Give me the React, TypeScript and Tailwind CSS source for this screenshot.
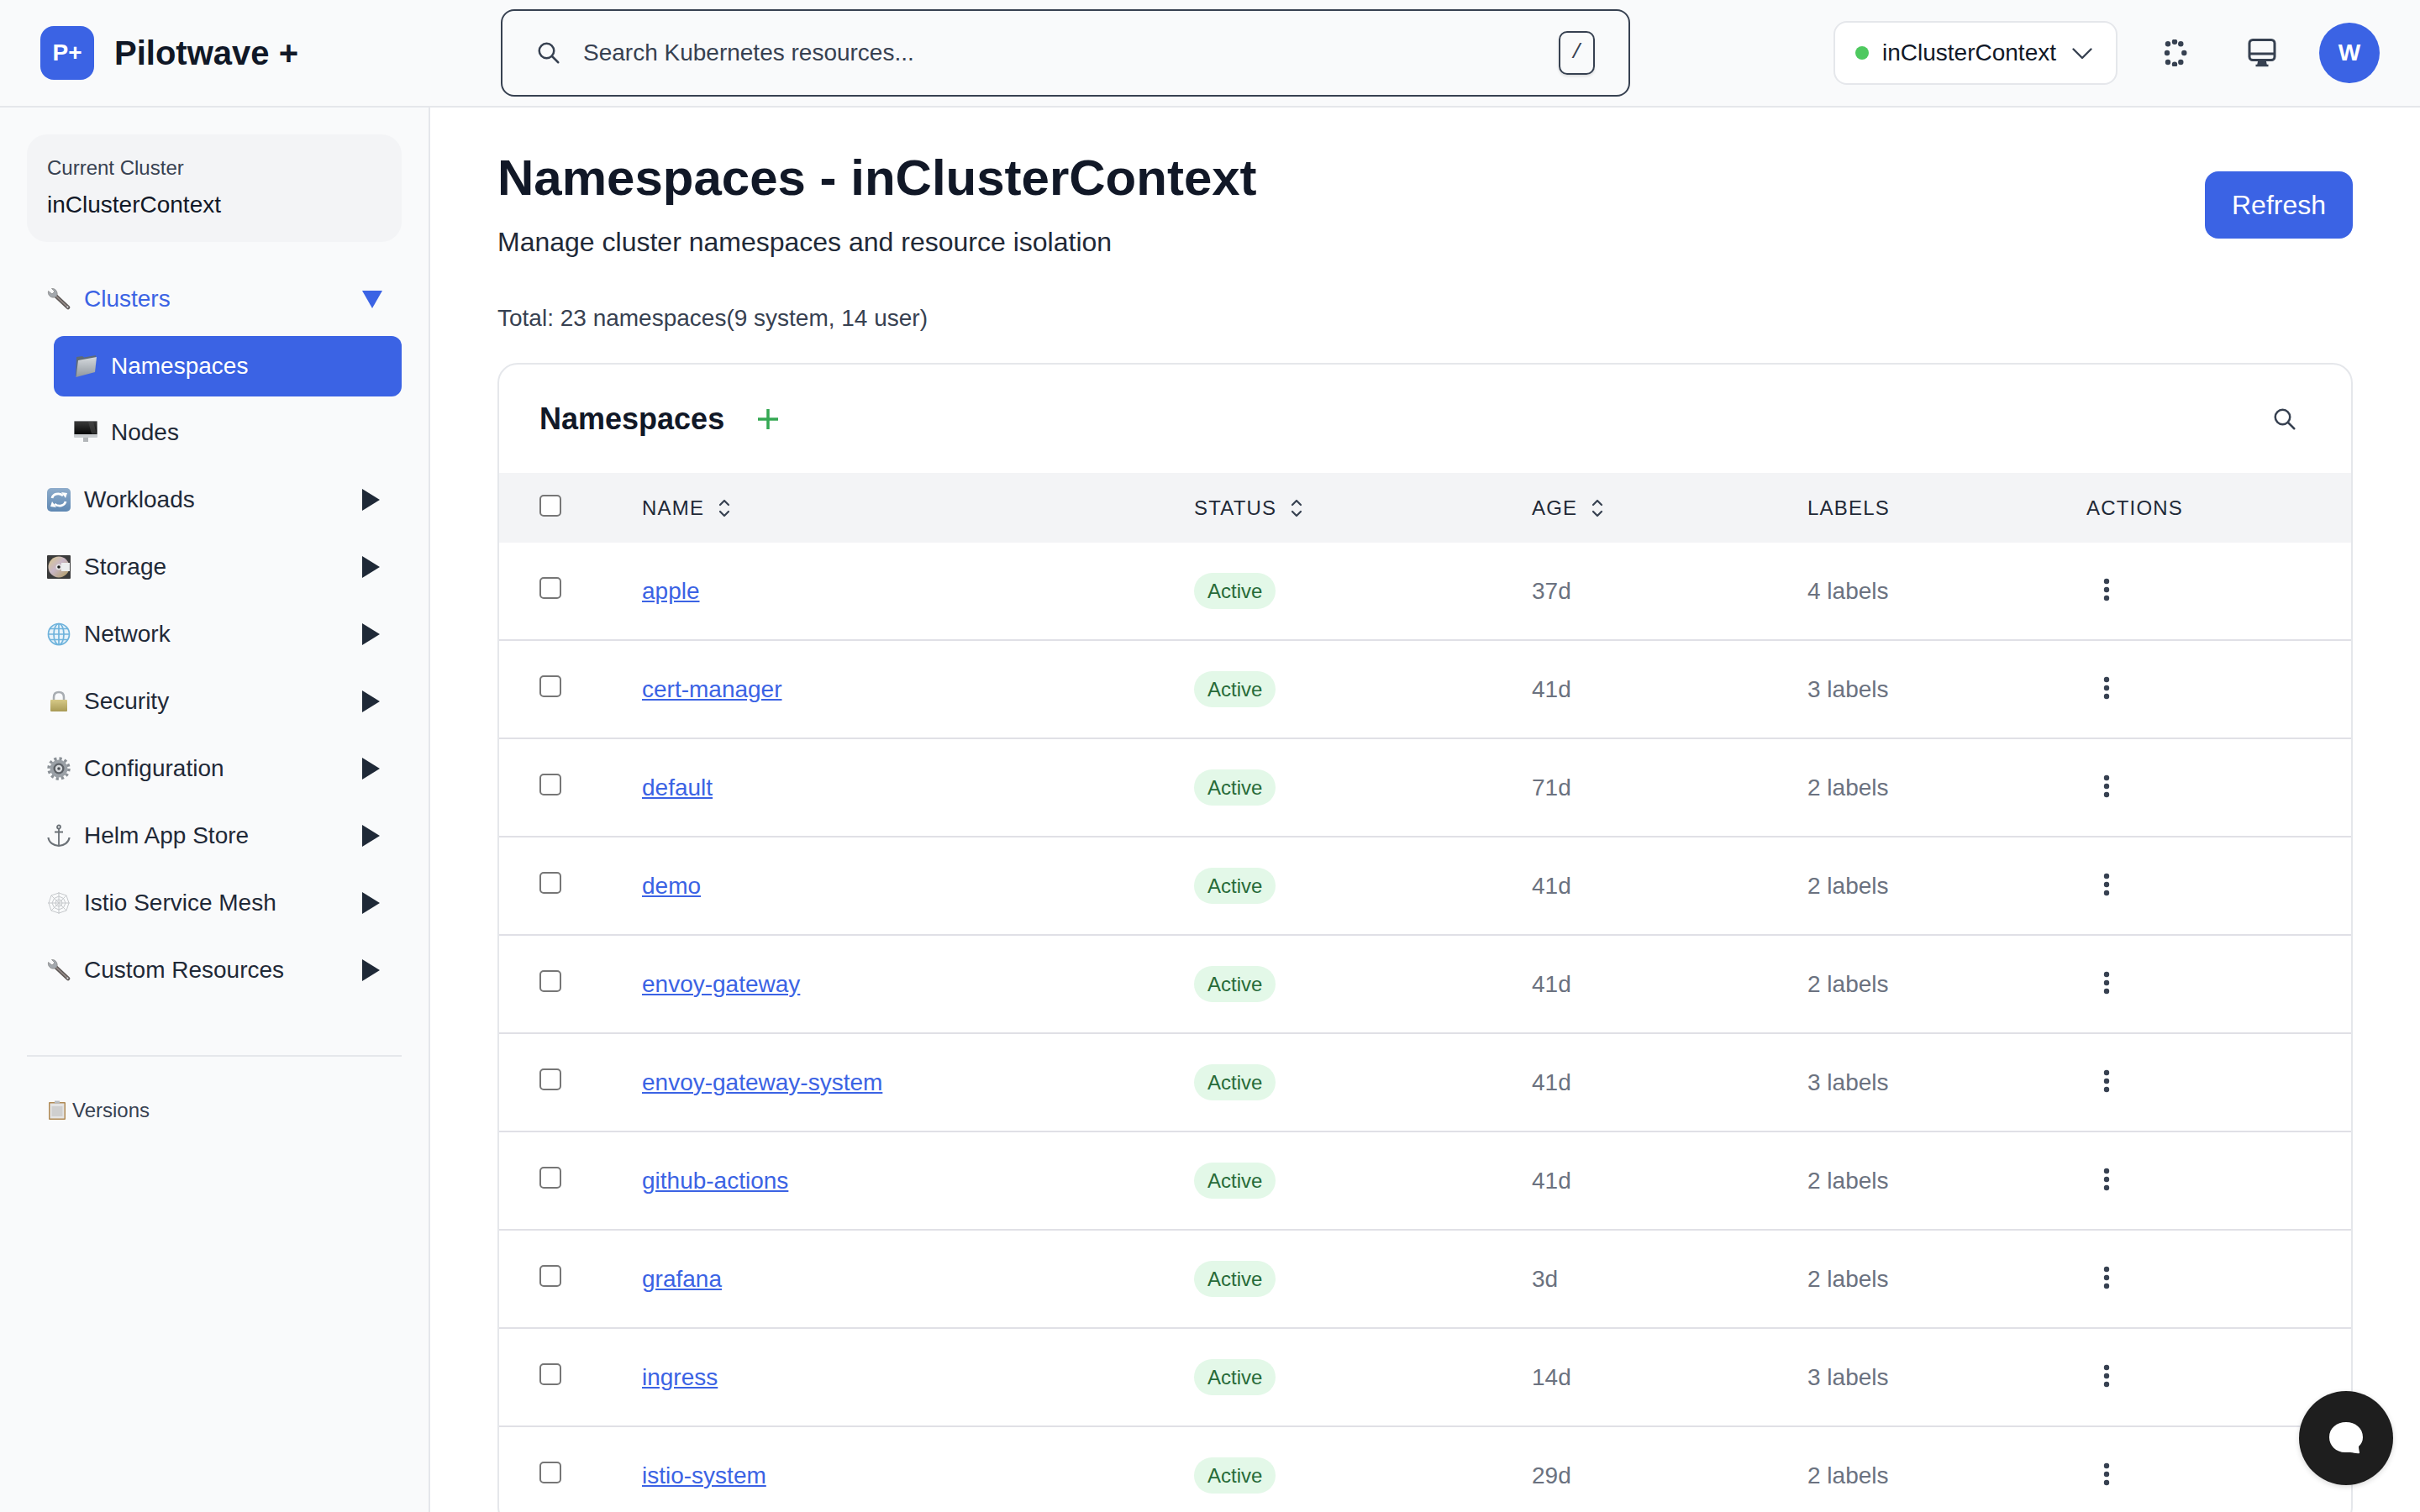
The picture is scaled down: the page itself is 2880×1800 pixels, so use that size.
const namespaces = [
  { name: "apple", age: "37d", labels: "4 labels" },
  { name: "cert-manager", age: "41d", labels: "3 labels" },
  { name: "default", age: "71d", labels: "2 labels" },
  { name: "demo", age: "41d", labels: "2 labels" },
  { name: "envoy-gateway", age: "41d", labels: "2 labels" },
  { name: "envoy-gateway-system", age: "41d", labels: "3 labels" },
  { name: "github-actions", age: "41d", labels: "2 labels" },
  { name: "grafana", age: "3d", labels: "2 labels" },
  { name: "ingress", age: "14d", labels: "3 labels" },
  { name: "istio-system", age: "29d", labels: "2 labels" },
];

const navItems = [
  { label: "Workloads", icon: <SyncIcon /> },
  { label: "Storage", icon: <DiscIcon /> },
  { label: "Network", icon: <GlobeIcon /> },
  { label: "Security", icon: <LockIcon /> },
  { label: "Configuration", icon: <GearIcon /> },
  { label: "Helm App Store", icon: <AnchorIcon /> },
  { label: "Istio Service Mesh", icon: <WebIcon /> },
  { label: "Custom Resources", icon: <WrenchIcon /> },
];

// emoji in the screenshot are Apple colour glyphs, no such font here so they are drawn
function WrenchIcon() {
  return (
    <svg viewBox="0 0 28 28" className="h-7 w-7">
      <path d="M9 9 L25 24" stroke="#5f5a58" strokeWidth="4.5" strokeLinecap="round" />
      <path d="M9 9 L24 23" stroke="#9a8f8c" strokeWidth="1.5" strokeLinecap="round" />
      <path d="M5.5 1.5 L9 5 L6 8 L1.5 4.5 C0.5 9 4 13 9 12 C12 11.5 13 8 11.5 5 C10.5 2.5 8 1 5.5 1.5 Z" fill="#a3a8ad" stroke="#777" strokeWidth="0.6" />
      <circle cx="24.5" cy="23.5" r="1" fill="#e5e7eb" />
    </svg>
  );
}

function FolderIcon() {
  return (
    <svg viewBox="0 0 28 28" className="h-7 w-7">
      <defs>
        <linearGradient id="folderFront" x1="0" y1="0" x2="0" y2="1">
          <stop offset="0" stopColor="#d5d9dd" />
          <stop offset="1" stopColor="#8f979e" />
        </linearGradient>
      </defs>
      <path d="M3 3 L10 2 L12 3.5 L26 1 L25 20 L2 26 Z" fill="#5d6a78" />
      <path d="M5 7 L27 3 L25 21 L2.5 27 Z" fill="url(#folderFront)" />
    </svg>
  );
}

function MonitorEmoji() {
  return (
    <svg viewBox="0 0 28 28" className="h-7 w-7">
      <defs>
        <linearGradient id="screenFill" x1="0" y1="0" x2="0" y2="1">
          <stop offset="0" stopColor="#3b3b3b" />
          <stop offset="1" stopColor="#050505" />
        </linearGradient>
      </defs>
      <rect x="0" y="0" width="28" height="20" rx="1" fill="#c9cccf" />
      <rect x="0.5" y="0.5" width="27" height="15.5" fill="url(#screenFill)" />
      <path d="M17 1 L23 1 L27 15.5 L21 15.5 Z" fill="#4a4a4a" opacity="0.6" />
      <rect x="11" y="20" width="6" height="5" fill="#b3b6b9" />
    </svg>
  );
}

function SyncIcon() {
  return (
    <svg viewBox="0 0 28 28" className="h-7 w-7">
      <defs>
        <linearGradient id="syncFill" x1="0" y1="0" x2="0" y2="1">
          <stop offset="0" stopColor="#8eaccb" />
          <stop offset="1" stopColor="#5f88b3" />
        </linearGradient>
      </defs>
      <rect x="0" y="0" width="28" height="28" rx="5" fill="url(#syncFill)" />
      <path d="M6 12 C7 7 14 5 19 9" fill="none" stroke="#fff" strokeWidth="2.8" />
      <path d="M22 16 C21 21 14 23 9 19" fill="none" stroke="#fff" strokeWidth="2.8" />
      <path d="M17 5 L24 6 L22 12 Z" fill="#fff" />
      <path d="M11 23 L4 22 L6 16 Z" fill="#fff" />
    </svg>
  );
}

function DiscIcon() {
  return (
    <svg viewBox="0 0 28 28" className="h-7 w-7">
      <defs>
        <linearGradient id="discFill" x1="0" y1="0" x2="1" y2="1">
          <stop offset="0" stopColor="#d9c98a" />
          <stop offset="0.45" stopColor="#c8b6c6" />
          <stop offset="1" stopColor="#b09a5a" />
        </linearGradient>
      </defs>
      <rect x="0" y="0" width="28" height="28" rx="1" fill="#3a3a3a" />
      <circle cx="14" cy="14" r="12.5" fill="url(#discFill)" />
      <rect x="17" y="9" width="10" height="10" fill="#eceeee" />
      <circle cx="14" cy="14" r="3.5" fill="#e5e5e5" />
      <circle cx="14" cy="14" r="1.8" fill="#1b1b1b" />
    </svg>
  );
}

function GlobeIcon() {
  return (
    <svg viewBox="0 0 28 28" className="h-7 w-7" fill="none" stroke="#6fb3dc" strokeWidth="1.7">
      <circle cx="14" cy="14" r="12.5" fill="#e8f3fa" />
      <ellipse cx="14" cy="14" rx="6" ry="12.5" />
      <path d="M14 1.5 V26.5 M1.5 14 H26.5 M3.5 7.5 H24.5 M3.5 20.5 H24.5" />
    </svg>
  );
}

function LockIcon() {
  return (
    <svg viewBox="0 0 28 28" className="h-7 w-7">
      <defs>
        <linearGradient id="lockFill" x1="0" y1="0" x2="0" y2="1">
          <stop offset="0" stopColor="#d6c987" />
          <stop offset="1" stopColor="#a89a55" />
        </linearGradient>
      </defs>
      <path d="M8 13 V9 C8 5 10.5 3 14 3 C17.5 3 20 5 20 9 V13" fill="none" stroke="#a8adb2" strokeWidth="2.5" />
      <rect x="4" y="12" width="20" height="14" rx="1" fill="url(#lockFill)" />
    </svg>
  );
}

function GearIcon() {
  return (
    <svg viewBox="0 0 28 28" className="h-7 w-7">
      <circle cx="14" cy="14" r="10.5" fill="#9aa0a6" />
      <circle cx="14" cy="14" r="12" fill="none" stroke="#8a9096" strokeWidth="3.4" strokeDasharray="3.2 3.1" />
      <circle cx="14" cy="14" r="6.5" fill="#5b6066" />
      <circle cx="14" cy="14" r="4.2" fill="#d8dbde" />
      <circle cx="14" cy="14" r="1.8" fill="#4a4f55" />
    </svg>
  );
}

function AnchorIcon() {
  return (
    <svg viewBox="0 0 28 28" className="h-7 w-7" fill="none" stroke="#6b7177" strokeWidth="1.8">
      <circle cx="14" cy="3.5" r="2" />
      <path d="M14 5.5 V26 M9 9.5 H19" />
      <path d="M1.5 16 C2 22 8 25.5 14 26 C20 25.5 26 22 26.5 16" strokeWidth="2.2" />
    </svg>
  );
}

function WebIcon() {
  return (
    <svg viewBox="0 0 28 28" className="h-7 w-7" fill="none" stroke="#c6c9cc" strokeWidth="1">
      <path d="M14 1 V27 M1 14 H27 M5 5 L23 23 M23 5 L5 23" />
      <path d="M14 2 L23 5 L26 14 L23 23 L14 26 L5 23 L2 14 L5 5 Z" />
      <path d="M14 6 L19.5 8.5 L22 14 L19.5 19.5 L14 22 L8.5 19.5 L6 14 L8.5 8.5 Z" />
      <path d="M14 10 L17 11 L18 14 L17 17 L14 18 L11 17 L10 14 L11 11 Z" />
    </svg>
  );
}

function ClipboardIcon() {
  return (
    <svg viewBox="0 0 24 24" className="h-6 w-6">
      <rect x="2" y="2" width="20" height="21" rx="1" fill="#b08a55" />
      <rect x="3.5" y="3.5" width="17" height="18" fill="#e4e4e4" />
      <rect x="5.5" y="7" width="13" height="12" fill="#cfcfcf" />
      <rect x="9" y="0.5" width="6" height="3" fill="#b9bcbf" />
    </svg>
  );
}

function NavArrow({ open }: { open?: boolean }) {
  if (open) {
    return (
      <svg viewBox="0 0 24 21" className="h-[21px] w-6" fill="#3b63e4">
        <path d="M0 0 H24 L12 21 Z" />
      </svg>
    );
  }
  return (
    <svg viewBox="0 0 21 26" className="h-[26px] w-[21px]" fill="#1f2937">
      <path d="M0 0 L21 13 L0 26 Z" />
    </svg>
  );
}

function SortIcon() {
  return (
    <svg viewBox="0 0 14 22" className="ml-[17px] h-[22px] w-[14px]" fill="none" stroke="#374151" strokeWidth="2.2" strokeLinecap="round" strokeLinejoin="round">
      <path d="M2 7 L7 2 L12 7 M2 15 L7 20 L12 15" />
    </svg>
  );
}

function SearchGlass({ className }: { className: string }) {
  return (
    <svg viewBox="0 0 24 24" className={className} fill="none" stroke="#374151" strokeWidth="2" strokeLinecap="round" strokeLinejoin="round">
      <path d="M21 21l-6-6m2-5a7 7 0 11-14 0 7 7 0 0114 0z" />
    </svg>
  );
}

function LoadingDots() {
  const dots = [
    [15, 2.7],
    [7, 5.3],
    [22.3, 5.3],
    [6, 16],
    [26.3, 16],
    [7, 27],
    [15, 29.7],
    [22.3, 27],
  ];
  return (
    <svg viewBox="0 0 32 32" className="h-8 w-8" fill="#374151">
      {dots.map(([cx, cy]) => (
        <circle key={`${cx}-${cy}`} cx={cx} cy={cy} r="3.2" />
      ))}
    </svg>
  );
}

function MonitorIcon() {
  return (
    <svg viewBox="0 0 36 36" className="h-9 w-9" fill="none" stroke="#374151" strokeWidth="3" strokeLinejoin="round">
      <rect x="3" y="2.5" width="30" height="24" rx="4" />
      <path d="M3 19 H33" />
      <path d="M14 27 L13 32 H23 L22 27 Z" fill="#374151" strokeWidth="1.5" />
      <path d="M10.5 33 H25.5" strokeWidth="2.5" />
    </svg>
  );
}

function KebabIcon() {
  return (
    <svg viewBox="0 0 8 28" className="-mt-[4px] h-7 w-2" fill="#374151">
      <circle cx="4" cy="4" r="3.2" />
      <circle cx="4" cy="14" r="3.2" />
      <circle cx="4" cy="24" r="3.2" />
    </svg>
  );
}

function Checkbox() {
  return <input type="checkbox" className="m-0 block h-[26px] w-[26px] appearance-none rounded-[5px] border-2 border-[#767676] bg-white" />;
}

function Header() {
  return (
    <header className="flex h-[128px] shrink-0 items-center border-b-2 border-[#e5e7eb] bg-[#f9fafb]">
      <div className="flex w-[596px] shrink-0 items-center pl-12">
        <div className="flex h-16 w-16 items-center justify-center rounded-2xl bg-[#3b63e4] text-[28px] font-bold text-white">P+</div>
        <span className="ml-[24px] text-[40px] font-bold text-[#111827]">Pilotwave +</span>
      </div>
      <div className="flex h-[104px] w-[1344px] shrink-0 items-center rounded-2xl border-2 border-[#374151] pr-[40px] pl-[40px]">
        <SearchGlass className="h-[30px] w-[30px]" />
        <span className="ml-[26px] flex-1 text-[28px] text-[#374151]">Search Kubernetes resources...</span>
        <kbd className="flex h-[52px] w-[43px] items-center justify-center rounded-[10px] border-2 border-[#374151] text-[24px] text-[#374151] shadow-[0_2px_3px_rgba(0,0,0,0.12)]">/</kbd>
      </div>
      <div className="ml-[242px] flex h-[76px] w-[338px] shrink-0 items-center rounded-2xl border-2 border-[#e5e7eb] bg-white pl-6">
        <span className="h-4 w-4 rounded-full bg-[#4ec95f]" />
        <span className="ml-4 text-[28px] text-[#111827]">inClusterContext</span>
        <svg viewBox="0 0 24 24" className="ml-[13px] h-9 w-9" fill="none" stroke="#374151" strokeWidth="1.6" strokeLinecap="round" strokeLinejoin="round">
          <path d="M19 9l-7 7-7-7" />
        </svg>
      </div>
      <div className="ml-[53px]"><LoadingDots /></div>
      <div className="ml-[69px]"><MonitorIcon /></div>
      <div className="ml-[50px] flex h-[72px] w-[72px] items-center justify-center rounded-full bg-[#3b63e4] text-[28px] font-bold text-white">W</div>
    </header>
  );
}

function Sidebar() {
  return (
    <aside className="w-[512px] shrink-0 border-r-2 border-[#e5e7eb] bg-[#f9fafb] pt-8 pl-8">
      <div className="h-[128px] w-[446px] rounded-3xl bg-[#f3f4f6] pt-[20px] pl-6">
        <div className="text-[24px] leading-[40px] text-[#374151]">Current Cluster</div>
        <div className="mt-[4px] text-[28px] leading-[40px] text-[#111827]">inClusterContext</div>
      </div>

      <div className="mt-[28px] w-[446px]">
        <div className="flex h-[80px] items-center pr-[23px] pl-6 text-[28px] text-[#3b63e4]">
          <WrenchIcon />
          <span className="ml-4 flex-1">Clusters</span>
          <NavArrow open />
        </div>
        <div className="mt-1 ml-8 flex h-[72px] items-center rounded-xl bg-[#3b63e4] pl-6 text-[28px] text-white">
          <FolderIcon />
          <span className="ml-[16px]">Namespaces</span>
        </div>
        <div className="mt-[3px] ml-8 flex h-[80px] items-center pl-6 text-[28px] text-[#1f2937]">
          <MonitorEmoji />
          <span className="ml-[16px]">Nodes</span>
        </div>
        {navItems.map((item) => (
          <div key={item.label} className="flex h-[80px] items-center pr-[26px] pl-6 text-[28px] text-[#1f2937]">
            {item.icon}
            <span className="ml-4 flex-1">{item.label}</span>
            <NavArrow />
          </div>
        ))}
      </div>

      <div className="mt-[61px] w-[446px] border-t-2 border-[#e5e7eb] pt-[46px] pl-[24px]">
        <div className="flex items-center text-[24px] text-[#374151]">
          <ClipboardIcon />
          <span className="ml-[6px]">Versions</span>
        </div>
      </div>
    </aside>
  );
}

function TableSection() {
  return (
    <section className="mt-[33px] rounded-3xl border-2 border-[#e5e7eb] bg-white">
      <div className="flex h-[129px] items-center pr-[64px] pl-[48px]">
        <h2 className="text-[36px] font-bold text-[#111827]">Namespaces</h2>
        <svg viewBox="0 0 24 24" className="ml-[40px] h-6 w-6" fill="none" stroke="#34a853" strokeWidth="3.5">
          <path d="M12 0 V24 M0 12 H24" />
        </svg>
        <SearchGlass className="ml-auto h-[30px] w-[30px]" />
      </div>
      <table className="w-full table-fixed border-collapse">
        <colgroup>
          <col className="w-[122px]" />
          <col className="w-[657px]" />
          <col className="w-[402px]" />
          <col className="w-[328px]" />
          <col className="w-[332px]" />
          <col />
        </colgroup>
        <thead>
          <tr className="h-[83px] bg-[#f3f4f6] text-left text-[24px] font-normal tracking-[1.2px] text-[#1f2937]">
            <th className="pl-12 font-normal"><div className="-mt-[6px]"><Checkbox /></div></th>
            <th className="pl-12 font-normal"><span className="flex items-center">NAME<SortIcon /></span></th>
            <th className="pl-12 font-normal"><span className="flex items-center">STATUS<SortIcon /></span></th>
            <th className="pl-12 font-normal"><span className="flex items-center">AGE<SortIcon /></span></th>
            <th className="pl-12 font-normal">LABELS</th>
            <th className="pl-12 font-normal">ACTIONS</th>
          </tr>
        </thead>
        <tbody>
          {namespaces.map((ns) => (
            <tr key={ns.name} className="h-[117px] border-b-2 border-[#e0e0e6] text-[28px] text-[#6b7280] first:h-[116px]">
              <td className="pl-12"><div className="-mt-[8px]"><Checkbox /></div></td>
              <td className="pl-12"><a href="#" className="text-[#3b63e4] underline">{ns.name}</a></td>
              <td className="pl-12">
                <span className="inline-flex h-[43px] items-center rounded-full bg-[#e3f8e8] px-4 text-[24px] text-[#276b39]">Active</span>
              </td>
              <td className="pl-12">{ns.age}</td>
              <td className="pl-12">{ns.labels}</td>
              <td className="pl-[68px]"><KebabIcon /></td>
            </tr>
          ))}
        </tbody>
      </table>
    </section>
  );
}

export default function App() {
  return (
    <div className="flex h-screen flex-col overflow-hidden bg-white font-['Liberation_Sans',Arial,sans-serif]">
      <Header />
      <div className="flex min-h-0 flex-1">
        <Sidebar />
        <main className="flex-1 overflow-hidden pt-[48px] pr-[80px] pl-[80px]">
          <div className="flex items-start justify-between">
            <div>
              <h1 className="text-[60px] leading-[72px] font-bold text-[#111827]">Namespaces - inClusterContext</h1>
              <p className="mt-[20px] text-[32px] leading-[40px] text-[#1f2937]">Manage cluster namespaces and resource isolation</p>
            </div>
            <button className="mt-[28px] h-[80px] w-[176px] rounded-2xl bg-[#3b63e4] text-[32px] text-white">Refresh</button>
          </div>
          <p className="mt-[51px] text-[28px] leading-[40px] text-[#374151]">Total: 23 namespaces(9 system, 14 user)</p>
          <TableSection />
        </main>
      </div>
      <button className="fixed right-8 bottom-8 flex h-[112px] w-[112px] items-center justify-center rounded-full bg-[#1e1e1e] shadow-[0_2px_6px_rgba(0,0,0,0.15)]">
        <svg viewBox="0 0 40 38" className="h-[38px] w-10" fill="#fff">
          <path d="M20 0 C31 0 40 7 40 18 C40 23 38 26 35 29 C35 32 36 35 36 37 C33 38 29 36 25 36 L19 36 C8 36 0 28 0 18 C0 7 9 0 20 0 Z" />
        </svg>
      </button>
    </div>
  );
}
